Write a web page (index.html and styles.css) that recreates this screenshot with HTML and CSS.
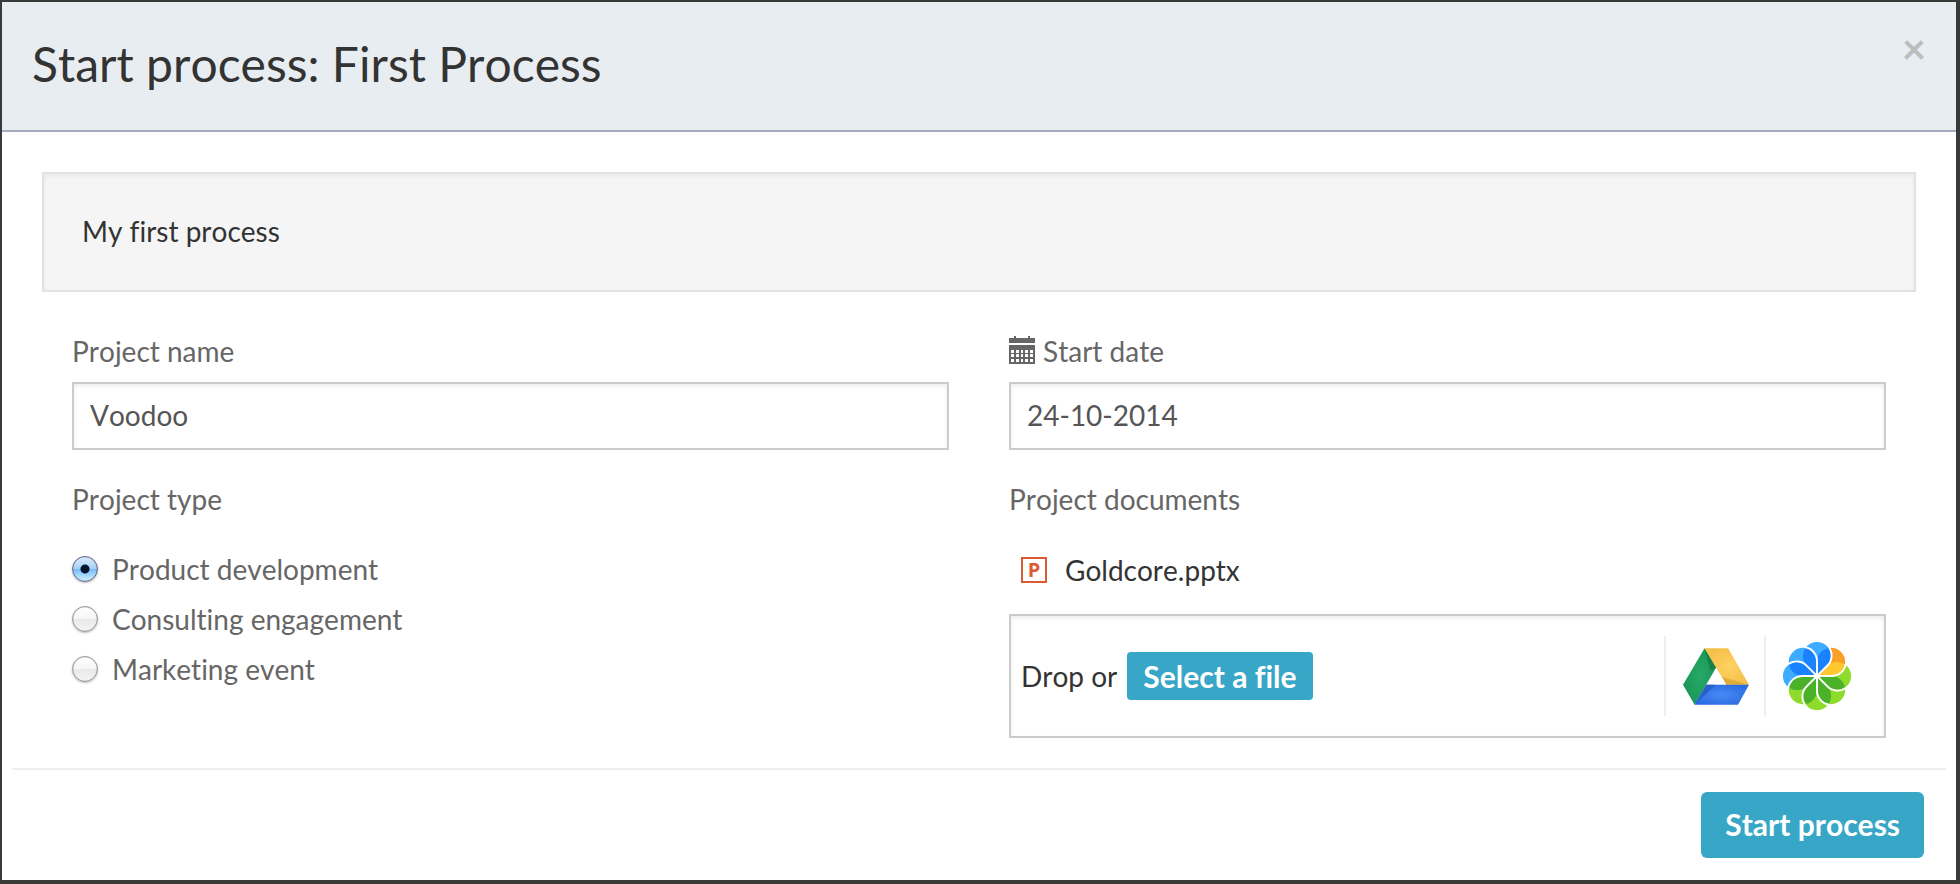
FILE: index.html
```html
<!DOCTYPE html>
<html lang="en">
<head>
  <meta charset="utf-8">
  <meta name="viewport" content="width=device-width, initial-scale=1">
  <title>Start process: First Process</title>
  <link rel="stylesheet" href="styles.css">
</head>
<body>
  <main class="modal" role="dialog" aria-labelledby="modal-title">
    <header class="modal-header">
      <h1 class="modal-title" id="modal-title">Start process: First Process</h1>
      <button class="close" type="button" aria-label="Close">×</button>
    </header>

    <form class="modal-form">
      <div class="modal-body">
        <p class="well">My first process</p>

        <div class="columns">
          <div class="column">
            <div class="field">
              <label class="label" for="project-name">Project name</label>
              <input class="text-input" id="project-name" type="text" value="Voodoo">
            </div>
            <fieldset class="field field-choices">
              <legend class="label">Project type</legend>
              <div class="choices">
                <label class="choice"><input class="radio" type="radio" name="type" checked>Product development</label>
                <label class="choice"><input class="radio" type="radio" name="type">Consulting engagement</label>
                <label class="choice"><input class="radio" type="radio" name="type">Marketing event</label>
              </div>
            </fieldset>
          </div>

          <div class="column">
            <div class="field">
              <label class="label" for="start-date">
                <svg class="calendar-icon" viewBox="0 0 26 28" aria-hidden="true">
                  <path fill="currentColor" d="M0 2h5V0h2v2h12V0h2v2h5v5H0z"/>
                  <path fill="currentColor" fill-rule="evenodd" d="M0 9h26v19H0zM2 14v3h3v-3zM7 14v3h3v-3zM12 14v3h2v-3zM16 14v3h3v-3zM21 14v3h3v-3zM2 18v3h3v-3zM7 18v3h3v-3zM12 18v3h2v-3zM16 18v3h3v-3zM21 18v3h3v-3zM2 23v3h3v-3zM7 23v3h3v-3zM12 23v3h2v-3zM16 23v3h3v-3zM21 23v3h3v-3z"/>
                </svg>
                Start date
              </label>
              <input class="text-input" id="start-date" type="text" value="24-10-2014">
            </div>
            <div class="field" role="group" aria-labelledby="documents-label">
              <div class="label" id="documents-label">Project documents</div>
              <div class="file"><span class="file-icon" aria-hidden="true">P</span>Goldcore.pptx</div>
              <div class="dropzone">
                <span>Drop or</span>
                <button class="button button-small" type="button">Select a file</button>
                <div class="sources">
                  <button class="source" type="button" aria-label="Google Drive">
                    <svg class="drive-icon" viewBox="128 140 199 171" aria-hidden="true">
                      <defs>
                        <radialGradient id="drive-yellow" cx=".55" cy=".5" r=".55"><stop offset="0" stop-color="#ffd161"/><stop offset="1" stop-color="#f4c04a"/></radialGradient>
                        <radialGradient id="drive-green" cx=".5" cy=".5" r=".55"><stop offset="0" stop-color="#27a967"/><stop offset="1" stop-color="#189556"/></radialGradient>
                        <radialGradient id="drive-blue" cx=".5" cy=".5" r=".55"><stop offset="0" stop-color="#4a8af6"/><stop offset="1" stop-color="#2a6de0"/></radialGradient>
                      </defs>
                      <path fill="url(#drive-green)" d="M193 140l35 58-65 113-35-61z"/>
                      <path fill="#168048" d="M193 140l35 58-17 10z"/>
                      <path fill="url(#drive-yellow)" d="M193 140h71l63 110h-68z"/>
                      <path fill="#dfae3a" d="M246 227l81 23h-68z"/>
                      <path fill="url(#drive-blue)" d="M198 250h129l-33 61H163z"/>
                      <path fill="#2560cb" d="M198 250h28l-63 61z"/>
                    </svg>
                  </button>
                  <button class="source" type="button" aria-label="Alfresco">
                    <svg class="flower-icon" viewBox="-34 -34 68 68" aria-hidden="true">
                      <defs>
                        <path id="petal" d="M0 0L9.95-9.95A14.1 14.1 0 1 0-9.95-9.95z"/>
                        <path id="overlap" d="M0 0L9.95-9.95A14.1 14.1 0 0 0 11.6-27.95A14.1 14.1 0 0 0 0-14.1z"/>
                        <path id="seam" d="M0 0L9.95-9.95A14.1 14.1 0 0 0 11.9-28.7"/>
                      </defs>
                      <g fill="#8edb2b">
                        <use href="#petal" transform="rotate(90)"/><use href="#petal" transform="rotate(135)"/><use href="#petal" transform="rotate(180)"/><use href="#petal" transform="rotate(225)"/>
                      </g>
                      <use href="#petal" fill="#fba026" transform="rotate(45)"/>
                      <g fill="#3dabff">
                        <use href="#petal" transform="rotate(270)"/><use href="#petal" transform="rotate(315)"/><use href="#petal"/>
                      </g>
                      <g fill="#4bb129">
                        <use href="#overlap" transform="rotate(90)"/><use href="#overlap" transform="rotate(135)"/><use href="#overlap" transform="rotate(180)"/><use href="#overlap" transform="rotate(225)"/>
                      </g>
                      <use href="#overlap" fill="#ffc82e" transform="rotate(45)"/>
                      <g fill="#1a82ff">
                        <use href="#overlap" transform="rotate(270)"/><use href="#overlap" transform="rotate(315)"/><use href="#overlap"/>
                      </g>
                      <g fill="none" stroke="#fff" stroke-width="1.9">
                        <use href="#seam"/><use href="#seam" transform="rotate(45)"/><use href="#seam" transform="rotate(90)"/><use href="#seam" transform="rotate(135)"/><use href="#seam" transform="rotate(180)"/><use href="#seam" transform="rotate(225)"/><use href="#seam" transform="rotate(270)"/><use href="#seam" transform="rotate(315)"/>
                      </g>
                      <circle r="2.4" fill="#fff"/>
                    </svg>
                  </button>
                </div>
              </div>
            </div>
          </div>
        </div>
      </div>

      <footer class="modal-footer">
        <button class="button" type="submit">Start process</button>
      </footer>
    </form>
  </main>
</body>
</html>
```
FILE: styles.css
```css
* {
  box-sizing: border-box;
}

body {
  margin: 0;
  padding: 2px 4px 4px 2px;
  background: #393a3a;
  color: #333;
  font-family: Lato, "Liberation Sans", sans-serif;
  font-size: 28px;
  font-kerning: none;
  font-variant-ligatures: none;
  line-height: 40px;
}

button,
input {
  font: inherit;
  font-kerning: none;
  font-variant-ligatures: none;
}

.modal {
  background: #fff;
}

.modal-header {
  display: flex;
  justify-content: space-between;
  align-items: flex-start;
  padding: 30px 30px 34px;
  background: #e8edf1;
  border-bottom: 2px solid #a3acbd;
}

.modal-title {
  margin: 0;
  font-size: 48px;
  font-weight: 400;
  line-height: 64px;
}

.close {
  padding: 0;
  border: 0;
  background: none;
  color: #babec1;
  font-size: 42px;
  font-weight: 700;
  line-height: 32px;
  cursor: pointer;
}

.modal-body {
  padding: 40px 40px 30px;
}

.well {
  margin: 0 0 40px;
  padding: 37px 38px 39px;
  background: #f5f5f5;
  border: 2px solid #e2e2e2;
  box-shadow: inset 0 2px 4px rgba(0, 0, 0, 0.05);
}

.columns {
  display: grid;
  grid-template-columns: 1fr 1fr;
  gap: 60px;
  padding: 0 30px;
}

.column {
  display: flex;
  flex-direction: column;
  gap: 30px;
}

.field {
  min-width: 0;
  margin: 0;
  padding: 0;
  border: 0;
}

.label {
  display: flex;
  align-items: center;
  gap: 8px;
  margin-bottom: 12px;
  padding: 0;
  color: #666;
  line-height: 38px;
}

.calendar-icon {
  width: 26px;
  height: 28px;
  margin-bottom: 2px;
}

.text-input {
  display: block;
  width: 100%;
  height: 68px;
  padding: 0 16px 2px;
  background: #fff;
  border: 2px solid #ccc;
  border-radius: 0;
  box-shadow: inset 0 2px 4px rgba(0, 0, 0, 0.08);
  color: #555;
}

.choices {
  padding-top: 14px;
}

.choice {
  display: flex;
  align-items: center;
  gap: 14px;
  height: 50px;
  color: #666;
}

.radio {
  appearance: none;
  flex: none;
  width: 26px;
  height: 26px;
  margin: 0;
  border: 1px solid #969696;
  border-radius: 50%;
  background: linear-gradient(#fff 0%, #f6f6f6 48%, #e9e9e9 50%, #f4f4f4 100%);
  box-shadow: 0 1px 2px rgba(0, 0, 0, 0.25), inset 0 0 1px rgba(0, 0, 0, 0.4);
}

.radio:checked {
  border-color: #67678a;
  background:
    radial-gradient(circle, #04162e 0 4px, transparent 5px),
    linear-gradient(#dcedfb 0%, #a5d0f6 48%, #79bbf5 50%, #cdf2ff 100%);
}

.file {
  display: flex;
  align-items: center;
  gap: 18px;
  padding: 20px 12px 24px;
}

.file-icon {
  width: 26px;
  height: 26px;
  border: 2px solid #dc5b32;
  color: #dc5b32;
  font-family: "Open Sans", sans-serif;
  font-size: 20px;
  font-weight: 700;
  line-height: 22px;
  text-align: center;
}

.dropzone {
  display: flex;
  align-items: center;
  gap: 10px;
  padding: 20px 20px 20px 10px;
  border: 2px solid #ccc;
  box-shadow: inset 0 2px 4px rgba(0, 0, 0, 0.08);
}

.button {
  padding: 12px 24px 14px;
  border: 0;
  border-radius: 6px;
  background: #38a6c6;
  color: #fff;
  font-size: 30px;
  font-weight: 700;
  line-height: 40px;
  cursor: pointer;
}

.button-small {
  padding: 4px 16px;
  border-radius: 4px;
}

.sources {
  display: flex;
  margin-left: auto;
}

.source {
  display: flex;
  align-items: center;
  width: 100px;
  height: 80px;
  padding: 0 0 0 17px;
  border: 0;
  border-left: 2px solid #eee;
  background: none;
  cursor: pointer;
}

.drive-icon {
  width: 66px;
  height: 57px;
}

.flower-icon {
  width: 68px;
  height: 68px;
}

.modal-footer {
  display: flex;
  justify-content: flex-end;
  margin: 0 10px;
  padding: 22px 22px 22px 0;
  border-top: 2px solid #eee;
}
```
